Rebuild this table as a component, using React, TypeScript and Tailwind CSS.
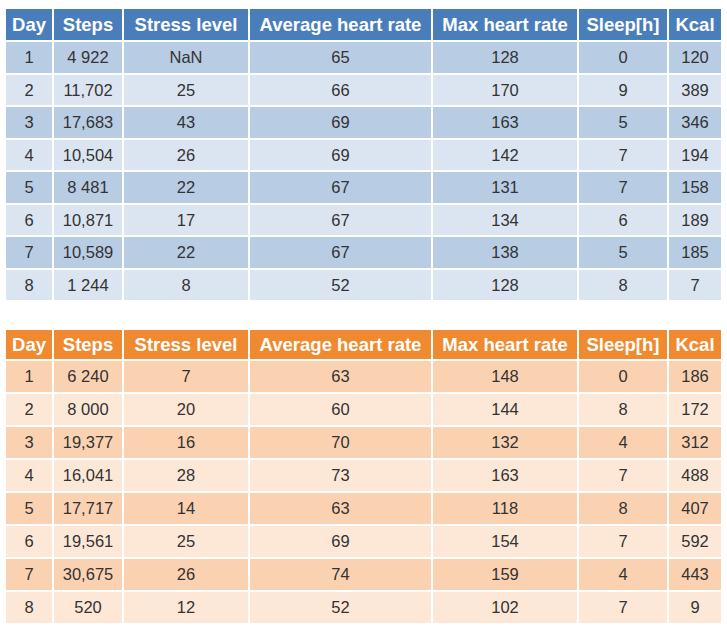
const headers = ["Day", "Steps", "Stress level", "Average heart rate", "Max heart rate", "Sleep[h]", "Kcal"];

const blueRows = [
  ["1", "4 922", "NaN", "65", "128", "0", "120"],
  ["2", "11,702", "25", "66", "170", "9", "389"],
  ["3", "17,683", "43", "69", "163", "5", "346"],
  ["4", "10,504", "26", "69", "142", "7", "194"],
  ["5", "8 481", "22", "67", "131", "7", "158"],
  ["6", "10,871", "17", "67", "134", "6", "189"],
  ["7", "10,589", "22", "67", "138", "5", "185"],
  ["8", "1 244", "8", "52", "128", "8", "7"],
];

const orangeRows = [
  ["1", "6 240", "7", "63", "148", "0", "186"],
  ["2", "8 000", "20", "60", "144", "8", "172"],
  ["3", "19,377", "16", "70", "132", "4", "312"],
  ["4", "16,041", "28", "73", "163", "7", "488"],
  ["5", "17,717", "14", "63", "118", "8", "407"],
  ["6", "19,561", "25", "69", "154", "7", "592"],
  ["7", "30,675", "26", "74", "159", "4", "443"],
  ["8", "520", "12", "52", "102", "7", "9"],
];

type Theme = { head: string; odd: string; even: string };

const blue: Theme = { head: "bg-[#4a7ebb]", odd: "bg-[#b8cce4]", even: "bg-[#dbe5f1]" };
const orange: Theme = { head: "bg-[#f08a30]", odd: "bg-[#fbd2b1]", even: "bg-[#fde8d8]" };

function DataTable({ rows, theme, rowsClass }: { rows: string[][]; theme: Theme; rowsClass: string }) {
  return (
    <div className={`grid grid-cols-[46px_68px_124px_181px_144px_88px_52px] gap-[2px] ${rowsClass}`}>
      {headers.map((h) => (
        <div
          key={h}
          className={`${theme.head} flex items-center justify-center text-[18.5px] font-bold text-white`}
        >
          {h}
        </div>
      ))}
      {rows.map((r, i) =>
        r.map((c, j) => (
          <div
            key={`${i}-${j}`}
            className={`${i % 2 === 0 ? theme.odd : theme.even} flex items-center justify-center text-[16.5px] text-[#333333]`}
          >
            {c}
          </div>
        ))
      )}
    </div>
  );
}

export default function App() {
  return (
    <div className="h-[630px] w-[727px] bg-white pl-[6px] pt-[9px] font-['Liberation_Sans',Arial,sans-serif]">
      <DataTable
        rows={blueRows}
        theme={blue}
        rowsClass="grid-rows-[31px_31px_30px_31px_30px_31px_30px_31px_30px]"
      />
      <div className="h-[30px]" />
      <DataTable
        rows={orangeRows}
        theme={orange}
        rowsClass="grid-rows-[29px_31px_31px_31px_31px_31px_31px_31px_31px]"
      />
    </div>
  );
}
